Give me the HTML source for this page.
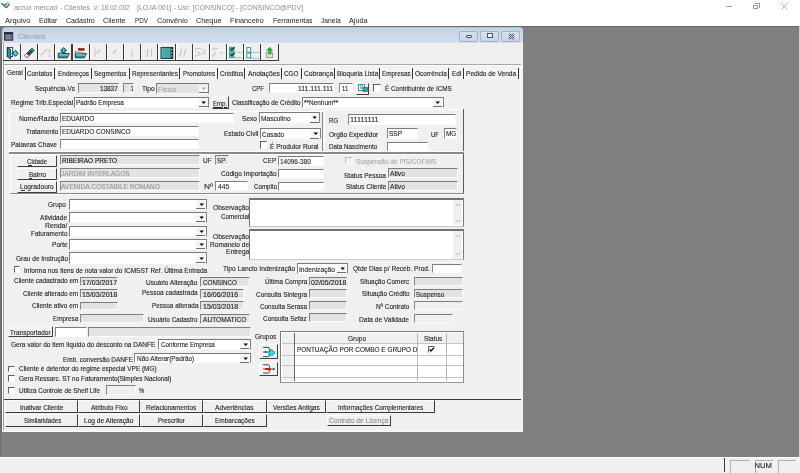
<!DOCTYPE html>
<html><head><meta charset="utf-8"><style>
*{margin:0;padding:0;box-sizing:border-box}
html,body{width:800px;height:473px;overflow:hidden;background:#fff;position:relative;font-family:"Liberation Sans",sans-serif}
.t{position:absolute;white-space:pre;-webkit-text-stroke:0.12px currentColor}
.b{position:absolute}
</style></head><body>
<svg class="b" style="left:1px;top:1px" width="9" height="8" viewBox="0 0 9 8"><path d="M0.5 2 L3 4.5 L6 2.5" stroke="#2a8a8a" stroke-width="1.6" fill="none"/><path d="M3 5 L5.5 6.5 L8.5 3" stroke="#666" stroke-width="1.4" fill="none"/><path d="M6 1.2 L8.3 2.2" stroke="#b8c040" stroke-width="1.4"/></svg>
<div class="b" style="left:725.8px;top:6px;width:6.2px;height:0.9px;background:#9a9a9a;"></div>
<div class="b" style="left:753.4px;top:4.6px;width:5.0px;height:4.5px;border:0.9px solid #9a9a9a;"></div>
<div class="b" style="left:755px;top:3.4px;width:4.8px;height:4.6px;border-top:0.9px solid #9a9a9a;border-right:0.9px solid #9a9a9a;"></div>
<svg class="b" style="left:781px;top:3px" width="7" height="7" viewBox="0 0 7 7"><path d="M0.5 0.5 L6.5 6.5 M6.5 0.5 L0.5 6.5" stroke="#9a9a9a" stroke-width="0.8"/></svg>
<div class="b" style="left:0px;top:26px;width:800px;height:431px;background:#808080;"></div>
<div class="b" style="left:0px;top:26px;width:800px;height:1.2px;background:#6a6a6a;"></div>
<div class="b" style="left:0px;top:26px;width:1px;height:431px;background:#727272;"></div>
<div class="b" style="left:0px;top:457px;width:800px;height:16px;background:#f0f0f0;"></div>
<div class="b" style="left:0px;top:457px;width:800px;height:1px;background:#fbfbfb;"></div>
<div class="b" style="left:798.7px;top:26px;width:1.3px;height:431px;background:#cfcfcf;"></div>
<div class="b" style="left:724.2px;top:458px;width:1.2px;height:14px;background:#3c3c3c;"></div>
<div class="b" style="left:730px;top:459.5px;width:19.5px;height:13.5px;border-top:1px solid #b0b0b0;border-left:1px solid #b0b0b0;"></div>
<div class="b" style="left:754.5px;top:459.5px;width:18.0px;height:13.5px;border-top:1px solid #b0b0b0;border-left:1px solid #b0b0b0;"></div>
<div class="b" style="left:777.5px;top:459.5px;width:18.0px;height:13.5px;border-top:1px solid #b0b0b0;border-left:1px solid #b0b0b0;"></div>
<div class="b" style="left:1.6px;top:27.4px;width:521.8px;height:404.9px;background:#d6e2f0;border-radius:4px 4px 0 0;border:1px solid #b4c2d2;border-bottom:none;"></div>
<div class="b" style="left:2.5px;top:28.4px;width:520.0px;height:14.8px;background:linear-gradient(#c3d2e4,#d3e0ee);border-radius:3px 3px 0 0;"></div>
<div class="b" style="left:2.2px;top:43px;width:1.4px;height:388.5px;background:#f4f8fc;"></div>
<div class="b" style="left:521.4px;top:43px;width:1.6px;height:388.5px;background:#f4f8fc;"></div>
<div class="b" style="left:2.2px;top:430.2px;width:520.8px;height:1.8px;background:#f4f8fc;"></div>
<div class="b" style="left:3.5px;top:43px;width:518.0px;height:387.2px;background:#f0f0f0;"></div>
<div class="b" style="left:3.2px;top:43px;width:0.8px;height:387.2px;background:#a4a4a4;"></div>
<div class="b" style="left:1.4px;top:43px;width:0.9px;height:389.3px;background:#666;"></div>
<svg class="b" style="left:4.4px;top:32px" width="9.2" height="8.6" viewBox="0 0 9.2 8.6"><rect x="0.4" y="0.4" width="8.4" height="7.8" fill="#555" stroke="#222" stroke-width="0.8"/><rect x="0.8" y="0.6" width="7.6" height="1.6" fill="#1a22b0"/><path d="M1.6 3.6h6M1.6 5.2h6M1.6 6.8h6" stroke="#e8e8e8" stroke-width="0.7" stroke-dasharray="1.2 0.6"/></svg>
<div class="t" style="left:17.5px;top:32.94px;font-size:7.8px;line-height:8.71px;color:#9ba7b6;">Clientes</div>
<div class="b" style="left:459px;top:30.5px;width:19.2px;height:11.3px;background:linear-gradient(#d6e2f0,#c7d6e9);border:1px solid #a4b4c8;border-radius:2px;"></div>
<div class="b" style="left:480px;top:30.5px;width:19px;height:11.3px;background:linear-gradient(#d6e2f0,#c7d6e9);border:1px solid #a4b4c8;border-radius:2px;"></div>
<div class="b" style="left:501px;top:30.5px;width:19px;height:11.3px;background:linear-gradient(#d6e2f0,#c7d6e9);border:1px solid #a4b4c8;border-radius:2px;"></div>
<div class="b" style="left:465.5px;top:34.6px;width:6.0px;height:3.0px;background:#eee;border:1px solid #555;border-radius:1px;"></div>
<div class="b" style="left:487px;top:33.3px;width:6px;height:4.9px;background:#eee;border:1px solid #555;border-top-width:1.5px;"></div>
<svg class="b" style="left:507.5px;top:32.5px" width="7" height="7" viewBox="0 0 7 7"><path d="M1 1 L6 6 M6 1 L1 6" stroke="#555" stroke-width="2"/><path d="M1 1 L6 6 M6 1 L1 6" stroke="#f0f0f0" stroke-width="0.8"/></svg>
<div class="b" style="left:3.3px;top:59.9px;width:275.3px;height:1.4px;background:#3a3a3a;"></div>
<div class="b" style="left:3.8px;top:44px;width:1.0px;height:16px;background:#ffffff;"></div>
<div class="b" style="left:19.88px;top:44px;width:1.1px;height:17px;background:#3a3a3a;"></div>
<div class="b" style="left:20.98px;top:44px;width:1.0px;height:16px;background:#ffffff;"></div>
<div class="b" style="left:37.06px;top:44px;width:1.1px;height:17px;background:#3a3a3a;"></div>
<div class="b" style="left:38.16px;top:44px;width:1.0px;height:16px;background:#ffffff;"></div>
<div class="b" style="left:54.24px;top:44px;width:1.1px;height:17px;background:#3a3a3a;"></div>
<div class="b" style="left:55.34px;top:44px;width:1.0px;height:16px;background:#ffffff;"></div>
<div class="b" style="left:71.42px;top:44px;width:1.1px;height:17px;background:#3a3a3a;"></div>
<div class="b" style="left:72.52px;top:44px;width:1.0px;height:16px;background:#ffffff;"></div>
<div class="b" style="left:88.6px;top:44px;width:1.1px;height:17px;background:#3a3a3a;"></div>
<div class="b" style="left:89.7px;top:44px;width:1.0px;height:16px;background:#ffffff;"></div>
<div class="b" style="left:105.78px;top:44px;width:1.1px;height:17px;background:#3a3a3a;"></div>
<div class="b" style="left:106.88px;top:44px;width:1.0px;height:16px;background:#ffffff;"></div>
<div class="b" style="left:122.96px;top:44px;width:1.1px;height:17px;background:#3a3a3a;"></div>
<div class="b" style="left:124.06px;top:44px;width:1.0px;height:16px;background:#ffffff;"></div>
<div class="b" style="left:140.14px;top:44px;width:1.1px;height:17px;background:#3a3a3a;"></div>
<div class="b" style="left:141.24px;top:44px;width:1.0px;height:16px;background:#ffffff;"></div>
<div class="b" style="left:157.32px;top:44px;width:1.1px;height:17px;background:#3a3a3a;"></div>
<div class="b" style="left:158.42px;top:44px;width:1.0px;height:16px;background:#ffffff;"></div>
<div class="b" style="left:174.5px;top:44px;width:1.1px;height:17px;background:#3a3a3a;"></div>
<div class="b" style="left:175.6px;top:44px;width:1.0px;height:16px;background:#ffffff;"></div>
<div class="b" style="left:191.68px;top:44px;width:1.1px;height:17px;background:#3a3a3a;"></div>
<div class="b" style="left:192.78px;top:44px;width:1.0px;height:16px;background:#ffffff;"></div>
<div class="b" style="left:208.86px;top:44px;width:1.1px;height:17px;background:#3a3a3a;"></div>
<div class="b" style="left:209.96px;top:44px;width:1.0px;height:16px;background:#ffffff;"></div>
<div class="b" style="left:226.04px;top:44px;width:1.1px;height:17px;background:#3a3a3a;"></div>
<div class="b" style="left:227.14px;top:44px;width:1.0px;height:16px;background:#ffffff;"></div>
<div class="b" style="left:243.22px;top:44px;width:1.1px;height:17px;background:#3a3a3a;"></div>
<div class="b" style="left:244.32px;top:44px;width:1.0px;height:16px;background:#ffffff;"></div>
<div class="b" style="left:260.4px;top:44px;width:1.1px;height:17px;background:#3a3a3a;"></div>
<div class="b" style="left:261.5px;top:44px;width:1.0px;height:16px;background:#ffffff;"></div>
<div class="b" style="left:277.58px;top:44px;width:1.1px;height:17px;background:#3a3a3a;"></div>
<svg class="b" style="left:3.3px;top:43.6px" width="17" height="17" viewBox="0 0 17 17"><rect x="4.3" y="3.5" width="5.4" height="9.1" fill="#fff" stroke="#222" stroke-width="0.8"/><path d="M4.3 3.6 L7.6 5.3 L7.6 14.9 L4.3 12.7 Z" fill="#1e9c9c" stroke="#0e2a2a" stroke-width="0.8"/><path d="M12.4 6.4 L15.3 9.3 L12.4 12.2 L9.6 9.3 Z" fill="#12f0f0" stroke="#111" stroke-width="0.9"/><circle cx="9.4" cy="9.3" r="0.8" fill="#1a2ab0"/></svg>
<svg class="b" style="left:20.48px;top:43.6px" width="17" height="17" viewBox="0 0 17 17"><path d="M4.6 11.4 L11.9 4.1 L14.3 6.5 L7 13.8 Z" fill="#444" stroke="#333" stroke-width="0.6"/><path d="M10.3 5.7 L11.9 4.1 L14.3 6.5 L12.7 8.1 Z" fill="#2aa0a0" stroke="#1a5a5a" stroke-width="0.5"/><path d="M4.6 11.4 L6.6 9.4 L9 11.8 L7 13.8 Z" fill="#fff" stroke="#444" stroke-width="0.7"/></svg>
<svg class="b" style="left:37.66px;top:43.6px" width="17" height="17" viewBox="0 0 17 17"><path d="M3.5 13 L3.5 9.5 L6 9.5 L6 7 L8.6 7 L8.6 4.5 M9.5 6.5 L11.5 6.5 L11.5 9.5 M10 12 L13 12" stroke="#c4c4c4" stroke-width="1" fill="none"/></svg>
<svg class="b" style="left:54.84px;top:43.6px" width="17" height="17" viewBox="0 0 17 17"><path d="M3.2 9.6 L3.2 13.8 L12.3 13.8 L14.4 9.6 Z" fill="#2a9090" stroke="#1a2a2a" stroke-width="0.8"/><path d="M3.2 9.6 L5 8.6 L8 8.6 L8.6 9.6" fill="#bfe8e8" stroke="#1a2a2a" stroke-width="0.6"/><path d="M4.2 11 L13.4 11" stroke="#c8f0f0" stroke-width="0.8"/><path d="M8.6 3.6 L11.4 6.4 L10 6.4 L10 8.8 L7.2 8.8 L7.2 6.4 L5.8 6.4 Z" fill="#19e0e0" stroke="#111" stroke-width="0.8"/><rect x="7.6" y="8.2" width="2" height="1.2" fill="#2233cc"/></svg>
<svg class="b" style="left:72.02px;top:43.6px" width="17" height="17" viewBox="0 0 17 17"><path d="M3.2 9.6 L3.2 13.8 L12.3 13.8 L14.4 9.6 Z" fill="#2a9090" stroke="#1a2a2a" stroke-width="0.8"/><path d="M3.2 9.6 L3.2 7.8 L5.2 7.8 L5.8 8.8 L10.5 8.8 L10.5 9.6" fill="#bfe8e8" stroke="#1a2a2a" stroke-width="0.6"/><path d="M4.2 11 L13.4 11" stroke="#c8f0f0" stroke-width="0.8"/><rect x="6.3" y="4.4" width="6" height="2" fill="#b01010" stroke="#600" stroke-width="0.4"/></svg>
<svg class="b" style="left:89.2px;top:43.6px" width="17" height="17" viewBox="0 0 17 17"><path d="M6 5 L6 13" stroke="#c4c4c4" stroke-width="1.1"/><path d="M11.5 5.5 L7.5 9.5" stroke="#c4c4c4" stroke-width="1.1"/></svg>
<svg class="b" style="left:106.38px;top:43.6px" width="17" height="17" viewBox="0 0 17 17"><path d="M10.5 5.5 L6.5 9.5" stroke="#c4c4c4" stroke-width="1.1"/><path d="M9.3 8.5 L10.5 12" stroke="#e2e2e2" stroke-width="0.8"/></svg>
<svg class="b" style="left:123.56px;top:43.6px" width="17" height="17" viewBox="0 0 17 17"><path d="M8 5 L8 13" stroke="#c4c4c4" stroke-width="1.1"/><path d="M8.5 11.5 L10.5 9.5" stroke="#e0e0e0" stroke-width="0.8"/></svg>
<svg class="b" style="left:140.74px;top:43.6px" width="17" height="17" viewBox="0 0 17 17"><path d="M6.5 5 L6.5 13 M10.5 5 L10.5 13" stroke="#c4c4c4" stroke-width="1.1"/></svg>
<svg class="b" style="left:157.92px;top:43.6px" width="17" height="17" viewBox="0 0 17 17"><rect x="3" y="3.4" width="11.8" height="11" fill="#48a8a8" stroke="#143030" stroke-width="0.9"/><rect x="12.6" y="3.4" width="2.2" height="11" fill="#1a2a2a"/><path d="M13.7 5 L13.7 6.4 M13.7 8.2 L13.7 9.8 M13.7 11.4 L13.7 12.8" stroke="#f0f0f0" stroke-width="0.9"/><path d="M4.4 4.4 L4.4 13.6" stroke="#86caca" stroke-width="0.6"/></svg>
<svg class="b" style="left:175.1px;top:43.6px" width="17" height="17" viewBox="0 0 17 17"><path d="M7 5 L4.5 12.5 M11 5 L8.5 12.5" stroke="#c4c4c4" stroke-width="1.1"/><path d="M8 11 L10 12.5" stroke="#e0e0e0" stroke-width="0.8"/></svg>
<svg class="b" style="left:192.28px;top:43.6px" width="17" height="17" viewBox="0 0 17 17"><path d="M3.5 4.6 L9 4.6 M3.5 4.6 L3.5 7 M5 8.5 L8 8.5 L8 11 L3.8 11 L3.8 13 M10 6 L13 6 L13 9 M9.5 9.5 L13.5 9.5" stroke="#c4c4c4" stroke-width="1" fill="none"/></svg>
<svg class="b" style="left:209.46px;top:43.6px" width="17" height="17" viewBox="0 0 17 17"><path d="M3.8 4.6 L9 4.6 M3.8 4.6 L3.8 6.5 M6 7.5 L6 11 L3.8 11 L3.8 13.4 M10.5 9 L12.5 9 L13.5 8" stroke="#c4c4c4" stroke-width="1" fill="none"/></svg>
<svg class="b" style="left:226.64px;top:43.6px" width="17" height="17" viewBox="0 0 17 17"><rect x="2.6" y="3.2" width="4.4" height="4.4" fill="#6ab8b8" stroke="#2a9090" stroke-width="0.8"/><rect x="2.6" y="8.8" width="4.4" height="4.8" fill="#6ab8b8" stroke="#2a9090" stroke-width="0.8"/><path d="M3.4 4.6 L4.8 6 L7.6 3.3 M3.4 10.2 L4.8 11.6 L7.6 8.9" stroke="#111" stroke-width="1.1" fill="none"/><path d="M7.2 8.2 L15 8.2 M7.2 13.8 L15 13.8" stroke="#3aa8a8" stroke-width="0.9" stroke-dasharray="1.3 0.9"/></svg>
<svg class="b" style="left:243.82px;top:43.6px" width="17" height="17" viewBox="0 0 17 17"><rect x="2.8" y="3.6" width="3.8" height="4.4" fill="#fff" stroke="#3aa0a0" stroke-width="1.1"/><rect x="2.8" y="9.2" width="3.8" height="4.6" fill="#fff" stroke="#3aa0a0" stroke-width="1.1"/><path d="M6.8 8.6 L15 8.6 M6.8 14.4 L15 14.4" stroke="#3aa8a8" stroke-width="0.9" stroke-dasharray="1.3 0.9"/></svg>
<svg class="b" style="left:261.0px;top:43.6px" width="17" height="17" viewBox="0 0 17 17"><rect x="5.2" y="8.8" width="6.4" height="4.8" fill="#dedede" stroke="#999" stroke-width="0.9"/><path d="M8.6 3.2 L11.6 6.4 L10 6.4 L10 10 L7.4 10 L7.4 6.4 L5.8 6.4 Z" fill="#22aa22" stroke="#128812" stroke-width="0.5"/><path d="M8.2 6.6 L8.2 9.6" stroke="#8fe08f" stroke-width="0.8"/></svg>
<div class="b" style="left:3.5px;top:64.2px;width:517.5px;height:1.2px;background:#a8a8a8;"></div>
<div class="b" style="left:3.5px;top:65.4px;width:517.5px;height:1.1px;background:#fdfdfd;"></div>
<div class="b" style="left:519.6px;top:65.4px;width:1.2px;height:333.6px;background:#fcfcfc;"></div>
<div class="b" style="left:3.6px;top:66.5px;width:21.6px;height:13.3px;background:#f0f0f0;"></div>
<div class="b" style="left:3.6px;top:66.5px;width:1.0px;height:13.3px;background:#ffffff;"></div>
<div class="b" style="left:25.2px;top:66.6px;width:1.1px;height:13.2px;background:#333;"></div>
<div class="b" style="left:26.3px;top:67.4px;width:28.1px;height:11.6px;background:#f3f3f3;"></div>
<div class="b" style="left:26.3px;top:67.4px;width:0.8px;height:11.6px;background:#ffffff;"></div>
<div class="b" style="left:54.4px;top:67.5px;width:1.1px;height:11.5px;background:#333;"></div>
<div class="b" style="left:55.5px;top:67.4px;width:35.4px;height:11.6px;background:#f3f3f3;"></div>
<div class="b" style="left:55.5px;top:67.4px;width:0.8px;height:11.6px;background:#ffffff;"></div>
<div class="b" style="left:90.9px;top:67.5px;width:1.1px;height:11.5px;background:#333;"></div>
<div class="b" style="left:92.0px;top:67.4px;width:36.6px;height:11.6px;background:#f3f3f3;"></div>
<div class="b" style="left:92.0px;top:67.4px;width:0.8px;height:11.6px;background:#ffffff;"></div>
<div class="b" style="left:128.6px;top:67.5px;width:1.1px;height:11.5px;background:#333;"></div>
<div class="b" style="left:129.7px;top:67.4px;width:49.3px;height:11.6px;background:#f3f3f3;"></div>
<div class="b" style="left:129.7px;top:67.4px;width:0.8px;height:11.6px;background:#ffffff;"></div>
<div class="b" style="left:179.0px;top:67.5px;width:1.1px;height:11.5px;background:#333;"></div>
<div class="b" style="left:180.1px;top:67.4px;width:36.5px;height:11.6px;background:#f3f3f3;"></div>
<div class="b" style="left:180.1px;top:67.4px;width:0.8px;height:11.6px;background:#ffffff;"></div>
<div class="b" style="left:216.6px;top:67.5px;width:1.1px;height:11.5px;background:#333;"></div>
<div class="b" style="left:217.7px;top:67.4px;width:26.6px;height:11.6px;background:#f3f3f3;"></div>
<div class="b" style="left:217.7px;top:67.4px;width:0.8px;height:11.6px;background:#ffffff;"></div>
<div class="b" style="left:244.3px;top:67.5px;width:1.1px;height:11.5px;background:#333;"></div>
<div class="b" style="left:245.4px;top:67.4px;width:35.4px;height:11.6px;background:#f3f3f3;"></div>
<div class="b" style="left:245.4px;top:67.4px;width:0.8px;height:11.6px;background:#ffffff;"></div>
<div class="b" style="left:280.8px;top:67.5px;width:1.1px;height:11.5px;background:#333;"></div>
<div class="b" style="left:281.9px;top:67.4px;width:19.2px;height:11.6px;background:#f3f3f3;"></div>
<div class="b" style="left:281.9px;top:67.4px;width:0.8px;height:11.6px;background:#ffffff;"></div>
<div class="b" style="left:301.1px;top:67.5px;width:1.1px;height:11.5px;background:#333;"></div>
<div class="b" style="left:302.2px;top:67.4px;width:31.9px;height:11.6px;background:#f3f3f3;"></div>
<div class="b" style="left:302.2px;top:67.4px;width:0.8px;height:11.6px;background:#ffffff;"></div>
<div class="b" style="left:334.1px;top:67.5px;width:1.1px;height:11.5px;background:#333;"></div>
<div class="b" style="left:335.2px;top:67.4px;width:44.0px;height:11.6px;background:#f3f3f3;"></div>
<div class="b" style="left:335.2px;top:67.4px;width:0.8px;height:11.6px;background:#ffffff;"></div>
<div class="b" style="left:379.2px;top:67.5px;width:1.1px;height:11.5px;background:#333;"></div>
<div class="b" style="left:380.3px;top:67.4px;width:31.4px;height:11.6px;background:#f3f3f3;"></div>
<div class="b" style="left:380.3px;top:67.4px;width:0.8px;height:11.6px;background:#ffffff;"></div>
<div class="b" style="left:411.7px;top:67.5px;width:1.1px;height:11.5px;background:#333;"></div>
<div class="b" style="left:412.8px;top:67.4px;width:35.5px;height:11.6px;background:#f3f3f3;"></div>
<div class="b" style="left:412.8px;top:67.4px;width:0.8px;height:11.6px;background:#ffffff;"></div>
<div class="b" style="left:448.3px;top:67.5px;width:1.1px;height:11.5px;background:#333;"></div>
<div class="b" style="left:449.4px;top:67.4px;width:13.2px;height:11.6px;background:#f3f3f3;"></div>
<div class="b" style="left:449.4px;top:67.4px;width:0.8px;height:11.6px;background:#ffffff;"></div>
<div class="b" style="left:462.6px;top:67.5px;width:1.1px;height:11.5px;background:#333;"></div>
<div class="b" style="left:463.7px;top:67.4px;width:54.2px;height:11.6px;background:#f3f3f3;"></div>
<div class="b" style="left:463.7px;top:67.4px;width:0.8px;height:11.6px;background:#ffffff;"></div>
<div class="b" style="left:517.9px;top:67.5px;width:1.1px;height:11.5px;background:#333;"></div>
<div class="b" style="left:78px;top:83px;width:41.2px;height:10px;background:#e3e3e3;border-top:1.5px solid #7c7c7c;border-left:1.3px solid #858585;border-bottom:1px solid #fbfbfb;border-right:1px solid #f8f8f8;"></div>
<div class="b" style="left:122.5px;top:83px;width:11.9px;height:10px;background:#e3e3e3;border-top:1.5px solid #7c7c7c;border-left:1.3px solid #858585;border-bottom:1px solid #fbfbfb;border-right:1px solid #f8f8f8;"></div>
<div class="b" style="left:156px;top:83px;width:53.4px;height:11px;background:#e3e3e3;border-top:1.6px solid #7a7a7a;border-left:1.4px solid #7f7f7f;border-right:1.4px solid #7f7f7f;border-bottom:1px solid #fbfbfb;"></div>
<div class="b" style="left:198.8px;top:84.6px;width:9.2px;height:8.8px;background:#f5f5f5;border-bottom:1.1px solid #6e6e6e;"></div>
<svg class="b" style="left:201.3px;top:87.25px" width="5.4" height="3.5" viewBox="0 0 5.4 3.5"><path d="M0.5 0.5 L4.9 0.5 L2.7 3.0 Z" fill="#a8a8a8"/></svg>
<div class="b" style="left:269.4px;top:83.4px;width:65.0px;height:9.6px;background:#ffffff;border-top:1.5px solid #7c7c7c;border-left:1.3px solid #858585;border-bottom:1px solid #fbfbfb;border-right:1px solid #f8f8f8;"></div>
<div class="b" style="left:338.9px;top:83.4px;width:14.4px;height:9.6px;background:#ffffff;border-top:1.5px solid #7c7c7c;border-left:1.3px solid #858585;border-bottom:1px solid #fbfbfb;border-right:1px solid #f8f8f8;"></div>
<div class="b" style="left:355.9px;top:82.6px;width:12.8px;height:12.0px;background:#f0f0f0;border-top:1px solid #fcfcfc;border-left:1px solid #fcfcfc;border-right:1px solid #404040;border-bottom:1.3px solid #404040;"></div>
<svg class="b" style="left:357.5px;top:84.4px" width="10" height="8" viewBox="0 0 10 8"><rect x="0.5" y="0.5" width="6" height="6" fill="#fff" stroke="#2a8a8a" stroke-width="0.9"/><path d="M2 2h3M2 4h3" stroke="#333" stroke-width="0.7"/><rect x="5" y="3.5" width="4.5" height="4" fill="#3aa0a0" stroke="#1a4a4a" stroke-width="0.6"/></svg>
<div class="b" style="left:373.4px;top:84.4px;width:7.9px;height:8.1px;background:#ffffff;border-top:1.4px solid #5e5e5e;border-left:1.4px solid #5e5e5e;border-right:1px solid #f8f8f8;border-bottom:1px solid #f8f8f8;"></div>
<div class="b" style="left:73.7px;top:96.5px;width:135.6px;height:11.5px;background:#ffffff;border-top:1.6px solid #7a7a7a;border-left:1.4px solid #7f7f7f;border-right:1.4px solid #7f7f7f;border-bottom:1px solid #fbfbfb;"></div>
<div class="b" style="left:198.7px;top:98.1px;width:9.2px;height:9.3px;background:#f5f5f5;border-bottom:1.1px solid #6e6e6e;"></div>
<svg class="b" style="left:201.2px;top:101.0px" width="5.4" height="3.5" viewBox="0 0 5.4 3.5"><path d="M0.5 0.5 L4.9 0.5 L2.7 3.0 Z" fill="#000"/></svg>
<div class="b" style="left:211.7px;top:96.2px;width:17.3px;height:12.7px;background:#f0f0f0;border-top:1px solid #fcfcfc;border-left:1px solid #fcfcfc;border-right:1px solid #404040;border-bottom:1.3px solid #404040;"></div>
<div class="b" style="left:302px;top:96.5px;width:141.5px;height:11.5px;background:#ffffff;border-top:1.6px solid #7a7a7a;border-left:1.4px solid #7f7f7f;border-right:1.4px solid #7f7f7f;border-bottom:1px solid #fbfbfb;"></div>
<div class="b" style="left:432.9px;top:98.1px;width:9.2px;height:9.3px;background:#f5f5f5;border-bottom:1.1px solid #6e6e6e;"></div>
<svg class="b" style="left:435.4px;top:101.0px" width="5.4" height="3.5" viewBox="0 0 5.4 3.5"><path d="M0.5 0.5 L4.9 0.5 L2.7 3.0 Z" fill="#000"/></svg>
<div class="b" style="left:9px;top:110.8px;width:313.5px;height:1.1px;background:#ffffff;"></div>
<div class="b" style="left:9px;top:110.8px;width:1px;height:41.7px;background:#ffffff;"></div>
<div class="b" style="left:323.5px;top:109.3px;width:139.5px;height:1.0px;background:#ffffff;"></div>
<div class="b" style="left:323.5px;top:109.3px;width:1.0px;height:42.9px;background:#ffffff;"></div>
<div class="b" style="left:322.1px;top:111.5px;width:1.3px;height:41.7px;background:#8a8a8a;"></div>
<div class="b" style="left:462.8px;top:108.8px;width:1.3px;height:44.7px;background:#5a5a5a;"></div>
<div class="b" style="left:9px;top:151.2px;width:455px;height:1.0px;background:#ffffff;"></div>
<div class="b" style="left:9px;top:152.1px;width:455px;height:1.5px;background:#8a8a8a;"></div>
<div class="b" style="left:9px;top:153.6px;width:455px;height:1.0px;background:#ffffff;"></div>
<div class="b" style="left:59.7px;top:113px;width:174.3px;height:10px;background:#ffffff;border-top:1.5px solid #7c7c7c;border-left:1.3px solid #858585;border-bottom:1px solid #fbfbfb;border-right:1px solid #f8f8f8;"></div>
<div class="b" style="left:59.7px;top:126px;width:139.3px;height:10px;background:#ffffff;border-top:1.5px solid #7c7c7c;border-left:1.3px solid #858585;border-bottom:1px solid #fbfbfb;border-right:1px solid #f8f8f8;"></div>
<div class="b" style="left:59.7px;top:139px;width:139.3px;height:10px;background:#ffffff;border-top:1.5px solid #7c7c7c;border-left:1.3px solid #858585;border-bottom:1px solid #fbfbfb;border-right:1px solid #f8f8f8;"></div>
<div class="b" style="left:259.4px;top:111.9px;width:60.85px;height:11.5px;background:#ffffff;border-top:1.6px solid #7a7a7a;border-left:1.4px solid #7f7f7f;border-right:1.4px solid #7f7f7f;border-bottom:1px solid #fbfbfb;"></div>
<div class="b" style="left:309.65px;top:113.5px;width:9.2px;height:9.3px;background:#f5f5f5;border-bottom:1.1px solid #6e6e6e;"></div>
<svg class="b" style="left:312.15px;top:116.4px" width="5.4" height="3.5" viewBox="0 0 5.4 3.5"><path d="M0.5 0.5 L4.9 0.5 L2.7 3.0 Z" fill="#000"/></svg>
<div class="b" style="left:260px;top:128px;width:60.7px;height:11.4px;background:#ffffff;border-top:1.6px solid #7a7a7a;border-left:1.4px solid #7f7f7f;border-right:1.4px solid #7f7f7f;border-bottom:1px solid #fbfbfb;"></div>
<div class="b" style="left:310.1px;top:129.6px;width:9.2px;height:9.2px;background:#f5f5f5;border-bottom:1.1px solid #6e6e6e;"></div>
<svg class="b" style="left:312.6px;top:132.45px" width="5.4" height="3.5" viewBox="0 0 5.4 3.5"><path d="M0.5 0.5 L4.9 0.5 L2.7 3.0 Z" fill="#000"/></svg>
<div class="b" style="left:260px;top:141.4px;width:6.8px;height:7.6px;background:#ffffff;border-top:1.4px solid #5e5e5e;border-left:1.4px solid #5e5e5e;border-right:1px solid #f8f8f8;border-bottom:1px solid #f8f8f8;"></div>
<div class="b" style="left:347.6px;top:114px;width:108.6px;height:10.6px;background:#ffffff;border-top:1.5px solid #7c7c7c;border-left:1.3px solid #858585;border-bottom:1px solid #fbfbfb;border-right:1px solid #f8f8f8;"></div>
<div class="b" style="left:386.9px;top:128.2px;width:31.2px;height:10.4px;background:#ffffff;border-top:1.5px solid #7c7c7c;border-left:1.3px solid #858585;border-bottom:1px solid #fbfbfb;border-right:1px solid #f8f8f8;"></div>
<div class="b" style="left:444px;top:128.2px;width:12.5px;height:10.4px;background:#ffffff;border-top:1.5px solid #7c7c7c;border-left:1.3px solid #858585;border-bottom:1px solid #fbfbfb;border-right:1px solid #f8f8f8;"></div>
<div class="b" style="left:387.2px;top:142.2px;width:41.3px;height:8.6px;background:#ffffff;border-top:1.5px solid #7c7c7c;border-left:1.3px solid #858585;border-bottom:1px solid #fbfbfb;border-right:1px solid #f8f8f8;"></div>
<div class="b" style="left:9.75px;top:153.6px;width:1.0px;height:39.4px;background:#ffffff;"></div>
<div class="b" style="left:462.8px;top:153.5px;width:1.3px;height:40.8px;background:#5a5a5a;"></div>
<div class="b" style="left:9.75px;top:193px;width:454.25px;height:1.3px;background:#8a8a8a;"></div>
<div class="b" style="left:9.75px;top:194.3px;width:454.25px;height:1.0px;background:#ffffff;"></div>
<div class="b" style="left:17.2px;top:154.7px;width:39.5px;height:12.5px;background:#f0f0f0;border-top:1px solid #fcfcfc;border-left:1px solid #fcfcfc;border-right:1px solid #404040;border-bottom:1.3px solid #404040;"></div>
<div class="b" style="left:17.2px;top:168.2px;width:39.5px;height:11.8px;background:#f0f0f0;border-top:1px solid #fcfcfc;border-left:1px solid #fcfcfc;border-right:1px solid #404040;border-bottom:1.3px solid #404040;"></div>
<div class="b" style="left:28.8px;top:177.7px;width:3.7px;height:0.6px;background:#333;"></div>
<div class="b" style="left:17.2px;top:181px;width:39.5px;height:11.6px;background:#f0f0f0;border-top:1px solid #fcfcfc;border-left:1px solid #fcfcfc;border-right:1px solid #404040;border-bottom:1.3px solid #404040;"></div>
<div class="b" style="left:20.5px;top:190px;width:4.0px;height:0.6px;background:#333;"></div>
<div class="b" style="left:27.5px;top:164.9px;width:4.0px;height:0.6px;background:#333;"></div>
<div class="b" style="left:60px;top:155.2px;width:140px;height:9.7px;background:#e3e3e3;border-top:1.5px solid #7c7c7c;border-left:1.3px solid #858585;border-bottom:1px solid #fbfbfb;border-right:1px solid #f8f8f8;"></div>
<div class="b" style="left:60px;top:168.2px;width:140px;height:9.4px;background:#e3e3e3;border-top:1.5px solid #7c7c7c;border-left:1.3px solid #858585;border-bottom:1px solid #fbfbfb;border-right:1px solid #f8f8f8;"></div>
<div class="b" style="left:60px;top:181px;width:140px;height:9.6px;background:#e3e3e3;border-top:1.5px solid #7c7c7c;border-left:1.3px solid #858585;border-bottom:1px solid #fbfbfb;border-right:1px solid #f8f8f8;"></div>
<div class="b" style="left:214.7px;top:155.2px;width:14.7px;height:9.7px;background:#e3e3e3;border-top:1.5px solid #7c7c7c;border-left:1.3px solid #858585;border-bottom:1px solid #fbfbfb;border-right:1px solid #f8f8f8;"></div>
<div class="b" style="left:277.5px;top:155.5px;width:46.2px;height:10.0px;background:#ffffff;border-top:1.5px solid #7c7c7c;border-left:1.3px solid #858585;border-bottom:1px solid #fbfbfb;border-right:1px solid #f8f8f8;"></div>
<div class="b" style="left:277.5px;top:168.5px;width:46.2px;height:9.5px;background:#ffffff;border-top:1.5px solid #7c7c7c;border-left:1.3px solid #858585;border-bottom:1px solid #fbfbfb;border-right:1px solid #f8f8f8;"></div>
<div class="b" style="left:215.2px;top:181.3px;width:32.6px;height:9.5px;background:#ffffff;border-top:1.5px solid #7c7c7c;border-left:1.3px solid #858585;border-bottom:1px solid #fbfbfb;border-right:1px solid #f8f8f8;"></div>
<div class="b" style="left:277.5px;top:181.7px;width:46.2px;height:9.1px;background:#ffffff;border-top:1.5px solid #7c7c7c;border-left:1.3px solid #858585;border-bottom:1px solid #fbfbfb;border-right:1px solid #f8f8f8;"></div>
<div class="b" style="left:345px;top:156.6px;width:7.5px;height:7.8px;background:#f0f0f0;border-top:1.4px solid #c0c0c0;border-left:1.4px solid #c0c0c0;border-right:1px solid #f8f8f8;border-bottom:1px solid #f8f8f8;"></div>
<div class="b" style="left:387.5px;top:168px;width:70.5px;height:10px;background:#e3e3e3;border-top:1.5px solid #7c7c7c;border-left:1.3px solid #858585;border-bottom:1px solid #fbfbfb;border-right:1px solid #f8f8f8;"></div>
<div class="b" style="left:387.5px;top:181px;width:70.5px;height:10px;background:#e3e3e3;border-top:1.5px solid #7c7c7c;border-left:1.3px solid #858585;border-bottom:1px solid #fbfbfb;border-right:1px solid #f8f8f8;"></div>
<div class="b" style="left:68.5px;top:198.5px;width:138.2px;height:11.5px;background:#ffffff;border-top:1.6px solid #7a7a7a;border-left:1.4px solid #7f7f7f;border-right:1.4px solid #7f7f7f;border-bottom:1px solid #fbfbfb;"></div>
<div class="b" style="left:196.1px;top:200.1px;width:9.2px;height:9.3px;background:#f5f5f5;border-bottom:1.1px solid #6e6e6e;"></div>
<svg class="b" style="left:198.6px;top:203.0px" width="5.4" height="3.5" viewBox="0 0 5.4 3.5"><path d="M0.5 0.5 L4.9 0.5 L2.7 3.0 Z" fill="#000"/></svg>
<div class="b" style="left:68.5px;top:212px;width:138.2px;height:11px;background:#ffffff;border-top:1.6px solid #7a7a7a;border-left:1.4px solid #7f7f7f;border-right:1.4px solid #7f7f7f;border-bottom:1px solid #fbfbfb;"></div>
<div class="b" style="left:196.1px;top:213.6px;width:9.2px;height:8.8px;background:#f5f5f5;border-bottom:1.1px solid #6e6e6e;"></div>
<svg class="b" style="left:198.6px;top:216.25px" width="5.4" height="3.5" viewBox="0 0 5.4 3.5"><path d="M0.5 0.5 L4.9 0.5 L2.7 3.0 Z" fill="#000"/></svg>
<div class="b" style="left:68.5px;top:225.5px;width:138.2px;height:11.0px;background:#ffffff;border-top:1.6px solid #7a7a7a;border-left:1.4px solid #7f7f7f;border-right:1.4px solid #7f7f7f;border-bottom:1px solid #fbfbfb;"></div>
<div class="b" style="left:196.1px;top:227.1px;width:9.2px;height:8.8px;background:#f5f5f5;border-bottom:1.1px solid #6e6e6e;"></div>
<svg class="b" style="left:198.6px;top:229.75px" width="5.4" height="3.5" viewBox="0 0 5.4 3.5"><path d="M0.5 0.5 L4.9 0.5 L2.7 3.0 Z" fill="#000"/></svg>
<div class="b" style="left:68.5px;top:239px;width:138.2px;height:11px;background:#ffffff;border-top:1.6px solid #7a7a7a;border-left:1.4px solid #7f7f7f;border-right:1.4px solid #7f7f7f;border-bottom:1px solid #fbfbfb;"></div>
<div class="b" style="left:196.1px;top:240.6px;width:9.2px;height:8.8px;background:#f5f5f5;border-bottom:1.1px solid #6e6e6e;"></div>
<svg class="b" style="left:198.6px;top:243.25px" width="5.4" height="3.5" viewBox="0 0 5.4 3.5"><path d="M0.5 0.5 L4.9 0.5 L2.7 3.0 Z" fill="#000"/></svg>
<div class="b" style="left:68.5px;top:252.3px;width:138.2px;height:11.3px;background:#ffffff;border-top:1.6px solid #7a7a7a;border-left:1.4px solid #7f7f7f;border-right:1.4px solid #7f7f7f;border-bottom:1px solid #fbfbfb;"></div>
<div class="b" style="left:196.1px;top:253.9px;width:9.2px;height:9.1px;background:#f5f5f5;border-bottom:1.1px solid #6e6e6e;"></div>
<svg class="b" style="left:198.6px;top:256.7px" width="5.4" height="3.5" viewBox="0 0 5.4 3.5"><path d="M0.5 0.5 L4.9 0.5 L2.7 3.0 Z" fill="#000"/></svg>
<div class="b" style="left:249.4px;top:198.3px;width:214.9px;height:28.3px;background:#fff;border-top:2px solid #737373;border-left:1.8px solid #777;border-right:1.8px solid #7c7c7c;border-bottom:1.4px solid #c8c8c8;"></div>
<div class="b" style="left:452.7px;top:200.3px;width:9.8px;height:24.9px;background:#f0f0f0;"></div>
<svg class="b" style="left:455.0px;top:203.3px" width="6" height="4" viewBox="0 0 6 4"><path d="M0.8 3.2 L3 1 L5.2 3.2" stroke="#a8a8a8" stroke-width="0.8" fill="none"/></svg>
<svg class="b" style="left:455.0px;top:218.6px" width="6" height="4" viewBox="0 0 6 4"><path d="M0.8 0.8 L3 3 L5.2 0.8" stroke="#a8a8a8" stroke-width="0.8" fill="none"/></svg>
<div class="b" style="left:249.4px;top:229.2px;width:214.9px;height:30.8px;background:#fff;border-top:2px solid #737373;border-left:1.8px solid #777;border-right:1.8px solid #7c7c7c;border-bottom:1.4px solid #c8c8c8;"></div>
<div class="b" style="left:452.7px;top:231.2px;width:9.8px;height:27.4px;background:#f0f0f0;"></div>
<svg class="b" style="left:455.0px;top:234.2px" width="6" height="4" viewBox="0 0 6 4"><path d="M0.8 3.2 L3 1 L5.2 3.2" stroke="#a8a8a8" stroke-width="0.8" fill="none"/></svg>
<svg class="b" style="left:455.0px;top:252px" width="6" height="4" viewBox="0 0 6 4"><path d="M0.8 0.8 L3 3 L5.2 0.8" stroke="#a8a8a8" stroke-width="0.8" fill="none"/></svg>
<div class="b" style="left:13.8px;top:266.4px;width:6.5px;height:7.0px;background:#ffffff;border-top:1.4px solid #5e5e5e;border-left:1.4px solid #5e5e5e;border-right:1px solid #f8f8f8;border-bottom:1px solid #f8f8f8;"></div>
<div class="b" style="left:296.6px;top:263px;width:51.3px;height:10.9px;background:#ffffff;border-top:1.6px solid #7a7a7a;border-left:1.4px solid #7f7f7f;border-right:1.4px solid #7f7f7f;border-bottom:1px solid #fbfbfb;"></div>
<div class="b" style="left:337.3px;top:264.6px;width:9.2px;height:8.7px;background:#f5f5f5;border-bottom:1.1px solid #6e6e6e;"></div>
<svg class="b" style="left:339.8px;top:267.2px" width="5.4" height="3.5" viewBox="0 0 5.4 3.5"><path d="M0.5 0.5 L4.9 0.5 L2.7 3.0 Z" fill="#000"/></svg>
<div class="b" style="left:431.5px;top:263.7px;width:30.5px;height:9.3px;background:#ffffff;border-top:1.5px solid #7c7c7c;border-left:1.3px solid #858585;border-bottom:1px solid #fbfbfb;border-right:1px solid #f8f8f8;"></div>
<div class="b" style="left:79.7px;top:277.2px;width:38.3px;height:8.6px;background:#e3e3e3;border-top:1.5px solid #7c7c7c;border-left:1.3px solid #858585;border-bottom:1px solid #fbfbfb;border-right:1px solid #f8f8f8;"></div>
<div class="b" style="left:79.7px;top:289.2px;width:38.3px;height:8.6px;background:#e3e3e3;border-top:1.5px solid #7c7c7c;border-left:1.3px solid #858585;border-bottom:1px solid #fbfbfb;border-right:1px solid #f8f8f8;"></div>
<div class="b" style="left:79.7px;top:301.6px;width:38.3px;height:8.8px;background:#e3e3e3;border-top:1.5px solid #7c7c7c;border-left:1.3px solid #858585;border-bottom:1px solid #fbfbfb;border-right:1px solid #f8f8f8;"></div>
<div class="b" style="left:79.7px;top:314px;width:63.9px;height:9px;background:#e3e3e3;border-top:1.5px solid #7c7c7c;border-left:1.3px solid #858585;border-bottom:1px solid #fbfbfb;border-right:1px solid #f8f8f8;"></div>
<div class="b" style="left:200.4px;top:277px;width:49.2px;height:10px;background:#e3e3e3;border-top:1.5px solid #7c7c7c;border-left:1.3px solid #858585;border-bottom:1px solid #fbfbfb;border-right:1px solid #f8f8f8;"></div>
<div class="b" style="left:200.4px;top:289px;width:43.2px;height:10px;background:#e3e3e3;border-top:1.5px solid #7c7c7c;border-left:1.3px solid #858585;border-bottom:1px solid #fbfbfb;border-right:1px solid #f8f8f8;"></div>
<div class="b" style="left:200.4px;top:301px;width:43.2px;height:9.4px;background:#e3e3e3;border-top:1.5px solid #7c7c7c;border-left:1.3px solid #858585;border-bottom:1px solid #fbfbfb;border-right:1px solid #f8f8f8;"></div>
<div class="b" style="left:200.4px;top:314px;width:49.2px;height:9.6px;background:#e3e3e3;border-top:1.5px solid #7c7c7c;border-left:1.3px solid #858585;border-bottom:1px solid #fbfbfb;border-right:1px solid #f8f8f8;"></div>
<div class="b" style="left:309px;top:277px;width:38.4px;height:9px;background:#e3e3e3;border-top:1.5px solid #7c7c7c;border-left:1.3px solid #858585;border-bottom:1px solid #fbfbfb;border-right:1px solid #f8f8f8;"></div>
<div class="b" style="left:309px;top:289px;width:38.4px;height:9px;background:#e3e3e3;border-top:1.5px solid #7c7c7c;border-left:1.3px solid #858585;border-bottom:1px solid #fbfbfb;border-right:1px solid #f8f8f8;"></div>
<div class="b" style="left:309px;top:301px;width:38.4px;height:9.4px;background:#e3e3e3;border-top:1.5px solid #7c7c7c;border-left:1.3px solid #858585;border-bottom:1px solid #fbfbfb;border-right:1px solid #f8f8f8;"></div>
<div class="b" style="left:309px;top:313px;width:38.4px;height:9.4px;background:#e3e3e3;border-top:1.5px solid #7c7c7c;border-left:1.3px solid #858585;border-bottom:1px solid #fbfbfb;border-right:1px solid #f8f8f8;"></div>
<div class="b" style="left:413.6px;top:277.2px;width:49.3px;height:8.8px;background:#e3e3e3;border-top:1.5px solid #7c7c7c;border-left:1.3px solid #858585;border-bottom:1px solid #fbfbfb;border-right:1px solid #f8f8f8;"></div>
<div class="b" style="left:413.6px;top:289.2px;width:49.3px;height:8.6px;background:#e3e3e3;border-top:1.5px solid #7c7c7c;border-left:1.3px solid #858585;border-bottom:1px solid #fbfbfb;border-right:1px solid #f8f8f8;"></div>
<div class="b" style="left:413.6px;top:301px;width:49.3px;height:9.4px;background:#efefef;border-top:1.5px solid #7c7c7c;border-left:1.3px solid #858585;border-bottom:1px solid #fbfbfb;border-right:1px solid #f8f8f8;"></div>
<div class="b" style="left:413.6px;top:314px;width:39.5px;height:9.4px;background:#efefef;border-top:1.5px solid #7c7c7c;border-left:1.3px solid #858585;border-bottom:1px solid #fbfbfb;border-right:1px solid #f8f8f8;"></div>
<div class="b" style="left:7.6px;top:325.9px;width:45.6px;height:11.0px;background:#f0f0f0;border-top:1px solid #fcfcfc;border-left:1px solid #fcfcfc;border-right:1px solid #404040;border-bottom:1.3px solid #404040;"></div>
<div class="b" style="left:54.9px;top:327.1px;width:32.1px;height:9.8px;background:#ffffff;border-top:1.5px solid #7c7c7c;border-left:1.3px solid #858585;border-bottom:1px solid #fbfbfb;border-right:1px solid #f8f8f8;"></div>
<div class="b" style="left:87.5px;top:326.8px;width:163.7px;height:10.1px;background:#e3e3e3;border-top:1.5px solid #7c7c7c;border-left:1.3px solid #858585;border-bottom:1px solid #fbfbfb;border-right:1px solid #f8f8f8;"></div>
<div class="b" style="left:158.4px;top:338.5px;width:92.3px;height:11.2px;background:#ffffff;border-top:1.6px solid #7a7a7a;border-left:1.4px solid #7f7f7f;border-right:1.4px solid #7f7f7f;border-bottom:1px solid #fbfbfb;"></div>
<div class="b" style="left:240.1px;top:340.1px;width:9.2px;height:9.0px;background:#f5f5f5;border-bottom:1.1px solid #6e6e6e;"></div>
<svg class="b" style="left:242.6px;top:342.85px" width="5.4" height="3.5" viewBox="0 0 5.4 3.5"><path d="M0.5 0.5 L4.9 0.5 L2.7 3.0 Z" fill="#000"/></svg>
<div class="b" style="left:134px;top:352.7px;width:116.7px;height:10.5px;background:#ffffff;border-top:1.6px solid #7a7a7a;border-left:1.4px solid #7f7f7f;border-right:1.4px solid #7f7f7f;border-bottom:1px solid #fbfbfb;"></div>
<div class="b" style="left:240.1px;top:354.3px;width:9.2px;height:8.3px;background:#f5f5f5;border-bottom:1.1px solid #6e6e6e;"></div>
<svg class="b" style="left:242.6px;top:356.7px" width="5.4" height="3.5" viewBox="0 0 5.4 3.5"><path d="M0.5 0.5 L4.9 0.5 L2.7 3.0 Z" fill="#000"/></svg>
<div class="b" style="left:8.4px;top:365.9px;width:6.5px;height:6.5px;background:#ffffff;border-top:1.4px solid #5e5e5e;border-left:1.4px solid #5e5e5e;border-right:1px solid #f8f8f8;border-bottom:1px solid #f8f8f8;"></div>
<div class="b" style="left:8.4px;top:375.4px;width:6.5px;height:6.6px;background:#ffffff;border-top:1.4px solid #5e5e5e;border-left:1.4px solid #5e5e5e;border-right:1px solid #f8f8f8;border-bottom:1px solid #f8f8f8;"></div>
<div class="b" style="left:8.4px;top:387.4px;width:6.5px;height:7.0px;background:#ffffff;border-top:1.4px solid #5e5e5e;border-left:1.4px solid #5e5e5e;border-right:1px solid #f8f8f8;border-bottom:1px solid #f8f8f8;"></div>
<div class="b" style="left:105.9px;top:385.3px;width:30.0px;height:10.2px;background:#efefef;border-top:1.5px solid #7c7c7c;border-left:1.3px solid #858585;border-bottom:1px solid #fbfbfb;border-right:1px solid #f8f8f8;"></div>
<div class="b" style="left:259.4px;top:344.4px;width:18.4px;height:14.9px;background:#f0f0f0;border-top:1px solid #fcfcfc;border-left:1px solid #fcfcfc;border-right:1px solid #404040;border-bottom:1.3px solid #404040;"></div>
<div class="b" style="left:259.4px;top:361.7px;width:18.4px;height:14.8px;background:#f0f0f0;border-top:1px solid #fcfcfc;border-left:1px solid #fcfcfc;border-right:1px solid #404040;border-bottom:1.3px solid #404040;"></div>
<svg class="b" style="left:256px;top:342px" width="26" height="38" viewBox="0 0 26 38"><path d="M7 5.4 L12 5.4 Q13.4 5.4 13.4 7 L13.4 13 Q13.4 14.6 12 14.6 L7 14.6 M7 10 L12.6 10" stroke="#333" stroke-width="0.9" fill="#fff"/><circle cx="9.6" cy="10" r="0.9" fill="#1a2ab0"/><path d="M14.4 7.6 L16.6 7.6 L16.6 9.6 L18.8 9.6 L18.8 11.9 L16.6 11.9 L16.6 13.8 L14.4 13.8 L14.4 11.9 L12.4 11.9 L12.4 9.6 L14.4 9.6 Z" fill="#10e8e8" stroke="#0a8a9a" stroke-width="0.5"/><path d="M7 22.8 L12 22.8 Q13.4 22.8 13.4 24.4 L13.4 29.4 Q13.4 31 12 31 L7 31 M7 27 L12.6 27" stroke="#333" stroke-width="0.9" fill="#fff"/><rect x="9.2" y="26" width="5.8" height="2.2" fill="#e81010"/><path d="M15 27.1 L17 27.1" stroke="#1a2ab0" stroke-width="0.7"/><ellipse cx="17.8" cy="27.1" rx="0.9" ry="1.1" fill="#1a2ab0"/></svg>
<div class="b" style="left:280.2px;top:331.3px;width:184.2px;height:51.4px;background:#fff;border-top:1.8px solid #7a7a7a;border-left:1.6px solid #7a7a7a;border-right:1.4px solid #8e8e8e;border-bottom:1.4px solid #9a9a9a;"></div>
<div class="b" style="left:281.5px;top:332.6px;width:181.6px;height:11.1px;background:#f0f0f0;"></div>
<div class="b" style="left:281.5px;top:332.6px;width:12.5px;height:48.8px;background:#f0f0f0;"></div>
<div class="b" style="left:281.5px;top:343.2px;width:181.6px;height:1.0px;background:#c4c4c4;"></div>
<div class="b" style="left:281.5px;top:354.6px;width:181.6px;height:1.0px;background:#c4c4c4;"></div>
<div class="b" style="left:281.5px;top:365.4px;width:181.6px;height:1.0px;background:#c4c4c4;"></div>
<div class="b" style="left:281.5px;top:376.8px;width:181.6px;height:1.0px;background:#c4c4c4;"></div>
<div class="b" style="left:293.8px;top:332.6px;width:1.0px;height:48.8px;background:#6a6a6a;"></div>
<div class="b" style="left:417.4px;top:332.6px;width:1.0px;height:48.8px;background:#b8b8b8;"></div>
<div class="b" style="left:446.2px;top:332.6px;width:1.0px;height:48.8px;background:#b8b8b8;"></div>
<div class="b" style="left:428.2px;top:345.7px;width:7.0px;height:7.2px;background:#ffffff;border-top:1.4px solid #5e5e5e;border-left:1.4px solid #5e5e5e;border-right:1px solid #f8f8f8;border-bottom:1px solid #f8f8f8;"></div>
<svg class="b" style="left:428.2px;top:345.7px" width="7.0" height="7.2" viewBox="0 0 7 7"><path d="M1.6 3.3 L3 4.9 L6 1.5" stroke="#000" stroke-width="1.3" fill="none"/></svg>
<div class="b" style="left:3.5px;top:399px;width:517.3px;height:1.2px;background:#3a3a3a;"></div>
<div class="b" style="left:5px;top:400.3px;width:73.2px;height:13.0px;background:#f0f0f0;border-top:1px solid #fdfdfd;border-left:1px solid #fdfdfd;border-right:1.2px solid #3a3a3a;border-bottom:1.3px solid #3a3a3a;"></div>
<div class="b" style="left:78.2px;top:400.3px;width:61.6px;height:13.0px;background:#f0f0f0;border-top:1px solid #fdfdfd;border-left:1px solid #fdfdfd;border-right:1.2px solid #3a3a3a;border-bottom:1.3px solid #3a3a3a;"></div>
<div class="b" style="left:139.8px;top:400.3px;width:63.2px;height:13.0px;background:#f0f0f0;border-top:1px solid #fdfdfd;border-left:1px solid #fdfdfd;border-right:1.2px solid #3a3a3a;border-bottom:1.3px solid #3a3a3a;"></div>
<div class="b" style="left:203px;top:400.3px;width:63.6px;height:13.0px;background:#f0f0f0;border-top:1px solid #fdfdfd;border-left:1px solid #fdfdfd;border-right:1.2px solid #3a3a3a;border-bottom:1.3px solid #3a3a3a;"></div>
<div class="b" style="left:266.6px;top:400.3px;width:59.8px;height:13.0px;background:#f0f0f0;border-top:1px solid #fdfdfd;border-left:1px solid #fdfdfd;border-right:1.2px solid #3a3a3a;border-bottom:1.3px solid #3a3a3a;"></div>
<div class="b" style="left:326.4px;top:400.3px;width:109.1px;height:13.0px;background:#f0f0f0;border-top:1px solid #fdfdfd;border-left:1px solid #fdfdfd;border-right:1.2px solid #3a3a3a;border-bottom:1.3px solid #3a3a3a;"></div>
<div class="b" style="left:5px;top:413.6px;width:73.2px;height:13.2px;background:#f0f0f0;border-top:1px solid #fdfdfd;border-left:1px solid #fdfdfd;border-right:1.2px solid #3a3a3a;border-bottom:1.3px solid #3a3a3a;"></div>
<div class="b" style="left:78.2px;top:413.6px;width:61.6px;height:13.2px;background:#f0f0f0;border-top:1px solid #fdfdfd;border-left:1px solid #fdfdfd;border-right:1.2px solid #3a3a3a;border-bottom:1.3px solid #3a3a3a;"></div>
<div class="b" style="left:139.8px;top:413.6px;width:63.2px;height:13.2px;background:#f0f0f0;border-top:1px solid #fdfdfd;border-left:1px solid #fdfdfd;border-right:1.2px solid #3a3a3a;border-bottom:1.3px solid #3a3a3a;"></div>
<div class="b" style="left:203px;top:413.6px;width:63.6px;height:13.2px;background:#f0f0f0;border-top:1px solid #fdfdfd;border-left:1px solid #fdfdfd;border-right:1.2px solid #3a3a3a;border-bottom:1.3px solid #3a3a3a;"></div>
<div class="b" style="left:327.1px;top:414.7px;width:63.5px;height:11.5px;background:#f0f0f0;border-top:1px solid #fdfdfd;border-left:1px solid #fdfdfd;border-right:1.2px solid #3a3a3a;border-bottom:1.3px solid #3a3a3a;"></div>
<div id="tx" style="position:absolute;left:0;top:0;width:800px;height:473px;filter:grayscale(1)">
<div class="t" style="left:14.0px;top:3.82px;font-size:7.6px;line-height:8.49px;color:#8a8a8a;transform:scaleX(0.95);transform-origin:0 0;-webkit-text-stroke:0;">acrux&#32;mercari&#32;-&#32;Clientes</div>
<div class="t" style="left:94.0px;top:3.82px;font-size:7.6px;line-height:8.49px;color:#8a8a8a;transform:scaleX(0.86);transform-origin:0 0;-webkit-text-stroke:0;">v:&#32;18.02.002</div>
<div class="t" style="left:136.75px;top:3.82px;font-size:7.6px;line-height:8.49px;color:#8a8a8a;transform:scaleX(0.92);transform-origin:0 0;-webkit-text-stroke:0;">[LOJA&#32;001]&#32;-&#32;Usr:&#32;[CONSINCO]&#32;-&#32;[CONSINCO@PDV]</div>
<div class="t" style="left:4.5px;top:16.62px;font-size:7.6px;line-height:8.49px;color:#1a1a1a;transform:scaleX(0.99);transform-origin:0 0;-webkit-text-stroke:0;">Arquivo</div>
<div class="t" style="left:38.75px;top:16.62px;font-size:7.6px;line-height:8.49px;color:#1a1a1a;transform:scaleX(0.92);transform-origin:0 0;-webkit-text-stroke:0;">Editar</div>
<div class="t" style="left:65.75px;top:16.62px;font-size:7.6px;line-height:8.49px;color:#1a1a1a;transform:scaleX(0.93);transform-origin:0 0;-webkit-text-stroke:0;">Cadastro</div>
<div class="t" style="left:103.25px;top:16.62px;font-size:7.6px;line-height:8.49px;color:#1a1a1a;transform:scaleX(0.95);transform-origin:0 0;-webkit-text-stroke:0;">Cliente</div>
<div class="t" style="left:134.5px;top:16.62px;font-size:7.6px;line-height:8.49px;color:#1a1a1a;transform:scaleX(0.83);transform-origin:0 0;-webkit-text-stroke:0;">PDV</div>
<div class="t" style="left:156.75px;top:16.62px;font-size:7.6px;line-height:8.49px;color:#1a1a1a;transform:scaleX(0.96);transform-origin:0 0;-webkit-text-stroke:0;">Convênio</div>
<div class="t" style="left:196.25px;top:16.62px;font-size:7.6px;line-height:8.49px;color:#1a1a1a;transform:scaleX(0.96);transform-origin:0 0;-webkit-text-stroke:0;">Cheque</div>
<div class="t" style="left:230.0px;top:16.62px;font-size:7.6px;line-height:8.49px;color:#1a1a1a;transform:scaleX(0.95);transform-origin:0 0;-webkit-text-stroke:0;">Financeiro</div>
<div class="t" style="left:272.5px;top:16.62px;font-size:7.6px;line-height:8.49px;color:#1a1a1a;transform:scaleX(0.92);transform-origin:0 0;-webkit-text-stroke:0;">Ferramentas</div>
<div class="t" style="left:320.75px;top:16.62px;font-size:7.6px;line-height:8.49px;color:#1a1a1a;transform:scaleX(0.88);transform-origin:0 0;-webkit-text-stroke:0;">Janela</div>
<div class="t" style="left:349.25px;top:16.62px;font-size:7.6px;line-height:8.49px;color:#1a1a1a;transform:scaleX(0.96);transform-origin:0 0;-webkit-text-stroke:0;">Ajuda</div>
<div class="t" style="left:754.5px;top:462.42px;font-size:7.6px;line-height:8.49px;color:#1e1e1e;">NUM</div>
<div class="t" style="left:7.0px;top:68.7px;font-size:7.4px;line-height:8.27px;color:#1e1e1e;transform:scaleX(0.86);transform-origin:0 0;">Geral</div>
<div class="t" style="left:27.2px;top:69.6px;font-size:7.4px;line-height:8.27px;color:#1e1e1e;transform:scaleX(0.86);transform-origin:0 0;">Contatos</div>
<div class="t" style="left:57.8px;top:69.6px;font-size:7.4px;line-height:8.27px;color:#1e1e1e;transform:scaleX(0.88);transform-origin:0 0;">Endereços</div>
<div class="t" style="left:94.0px;top:69.6px;font-size:7.4px;line-height:8.27px;color:#1e1e1e;transform:scaleX(0.87);transform-origin:0 0;">Segmentos</div>
<div class="t" style="left:131.5px;top:69.6px;font-size:7.4px;line-height:8.27px;color:#1e1e1e;transform:scaleX(0.88);transform-origin:0 0;">Representantes</div>
<div class="t" style="left:182.5px;top:69.6px;font-size:7.4px;line-height:8.27px;color:#1e1e1e;transform:scaleX(0.84);transform-origin:0 0;">Promotores</div>
<div class="t" style="left:219.5px;top:69.6px;font-size:7.4px;line-height:8.27px;color:#1e1e1e;transform:scaleX(0.85);transform-origin:0 0;">Créditos</div>
<div class="t" style="left:247.5px;top:69.6px;font-size:7.4px;line-height:8.27px;color:#1e1e1e;transform:scaleX(0.91);transform-origin:0 0;">Anotações</div>
<div class="t" style="left:283.75px;top:69.6px;font-size:7.4px;line-height:8.27px;color:#1e1e1e;transform:scaleX(0.86);transform-origin:0 0;">CGO</div>
<div class="t" style="left:303.5px;top:69.6px;font-size:7.4px;line-height:8.27px;color:#1e1e1e;transform:scaleX(0.91);transform-origin:0 0;">Cobrança</div>
<div class="t" style="left:336.5px;top:69.6px;font-size:7.4px;line-height:8.27px;color:#1e1e1e;transform:scaleX(0.89);transform-origin:0 0;">Bloqueia&#32;Lista</div>
<div class="t" style="left:381.6px;top:69.6px;font-size:7.4px;line-height:8.27px;color:#1e1e1e;transform:scaleX(0.86);transform-origin:0 0;">Empresas</div>
<div class="t" style="left:415.0px;top:69.6px;font-size:7.4px;line-height:8.27px;color:#1e1e1e;transform:scaleX(0.88);transform-origin:0 0;">Ocorrência</div>
<div class="t" style="left:451.7px;top:69.6px;font-size:7.4px;line-height:8.27px;color:#1e1e1e;transform:scaleX(0.87);transform-origin:0 0;">Edi</div>
<div class="t" style="left:465.9px;top:69.6px;font-size:7.4px;line-height:8.27px;color:#1e1e1e;transform:scaleX(0.89);transform-origin:0 0;">Pedido&#32;de&#32;Venda</div>
<div class="t" style="left:34.5px;top:85.1px;font-size:7.4px;line-height:8.27px;color:#1e1e1e;transform:scaleX(0.87);transform-origin:0 0;">Sequência-Vs</div>
<div class="t" style="left:100.0px;top:85.07px;font-size:7.4px;line-height:8.27px;color:#1e1e1e;transform:scaleX(0.86);transform-origin:0 0;">13837</div>
<div class="t" style="left:130.6px;top:85.07px;font-size:7.4px;line-height:8.27px;color:#1e1e1e;transform:scaleX(0.61);transform-origin:0 0;">1</div>
<div class="t" style="left:142.0px;top:85.1px;font-size:7.4px;line-height:8.27px;color:#1e1e1e;transform:scaleX(0.9);transform-origin:0 0;">Tipo</div>
<div class="t" style="left:157.5px;top:85.57px;font-size:7.4px;line-height:8.27px;color:#a8a8a8;transform:scaleX(0.92);transform-origin:0 0;">Física</div>
<div class="t" style="left:251.7px;top:85.1px;font-size:7.4px;line-height:8.27px;color:#1e1e1e;transform:scaleX(0.81);transform-origin:0 0;">CPF</div>
<div class="t" style="left:297.75px;top:85.27px;font-size:7.4px;line-height:8.27px;color:#1e1e1e;transform:scaleX(0.93);transform-origin:0 0;">111.111.111</div>
<div class="t" style="left:341.9px;top:85.27px;font-size:7.4px;line-height:8.27px;color:#1e1e1e;transform:scaleX(0.81);transform-origin:0 0;">11</div>
<div class="t" style="left:384.8px;top:85.1px;font-size:7.4px;line-height:8.27px;color:#1e1e1e;transform:scaleX(0.86);transform-origin:0 0;">É&#32;Contribuinte&#32;de&#32;ICMS</div>
<div class="t" style="left:11.0px;top:99.4px;font-size:7.4px;line-height:8.27px;color:#1e1e1e;transform:scaleX(0.89);transform-origin:0 0;">Regime&#32;Trib.Especial</div>
<div class="t" style="left:76.2px;top:99.32px;font-size:7.4px;line-height:8.27px;color:#1e1e1e;transform:scaleX(0.86);transform-origin:0 0;">Padrão&#32;Empresa</div>
<div class="t" style="left:213.4px;top:99.7px;font-size:7.4px;line-height:8.27px;color:#1e1e1e;transform:scaleX(0.82);transform-origin:0 0;text-decoration:underline;text-decoration-thickness:0.6px;text-underline-offset:1px;">Emp.</div>
<div class="t" style="left:232.2px;top:99.4px;font-size:7.4px;line-height:8.27px;color:#1e1e1e;transform:scaleX(0.86);transform-origin:0 0;">Classificação&#32;de&#32;Crédito</div>
<div class="t" style="left:304.4px;top:99.32px;font-size:7.4px;line-height:8.27px;color:#1e1e1e;transform:scaleX(0.87);transform-origin:0 0;">**Nenhum**</div>
<div class="t" style="left:19.2px;top:115.1px;font-size:7.4px;line-height:8.27px;color:#1e1e1e;transform:scaleX(0.91);transform-origin:0 0;">Nome/Razão</div>
<div class="t" style="left:61.9px;top:115.07px;font-size:7.4px;line-height:8.27px;color:#1e1e1e;transform:scaleX(0.87);transform-origin:0 0;">EDUARDO</div>
<div class="t" style="left:26.3px;top:127.7px;font-size:7.4px;line-height:8.27px;color:#1e1e1e;transform:scaleX(0.86);transform-origin:0 0;">Tratamento</div>
<div class="t" style="left:61.9px;top:128.07px;font-size:7.4px;line-height:8.27px;color:#1e1e1e;transform:scaleX(0.87);transform-origin:0 0;">EDUARDO&#32;CONSINCO</div>
<div class="t" style="left:11.0px;top:140.7px;font-size:7.4px;line-height:8.27px;color:#1e1e1e;transform:scaleX(0.88);transform-origin:0 0;">Palavras&#32;Chave</div>
<div class="t" style="left:242.0px;top:115.1px;font-size:7.4px;line-height:8.27px;color:#1e1e1e;transform:scaleX(0.89);transform-origin:0 0;">Sexo</div>
<div class="t" style="left:261.0px;top:114.72px;font-size:7.4px;line-height:8.27px;color:#1e1e1e;transform:scaleX(0.89);transform-origin:0 0;">Masculino</div>
<div class="t" style="left:223.6px;top:130.3px;font-size:7.4px;line-height:8.27px;color:#1e1e1e;transform:scaleX(0.88);transform-origin:0 0;">Estado&#32;Civil</div>
<div class="t" style="left:261.9px;top:130.77px;font-size:7.4px;line-height:8.27px;color:#1e1e1e;transform:scaleX(0.87);transform-origin:0 0;">Casado</div>
<div class="t" style="left:270.3px;top:142.9px;font-size:7.4px;line-height:8.27px;color:#1e1e1e;transform:scaleX(0.88);transform-origin:0 0;">É&#32;Produtor&#32;Rural</div>
<div class="t" style="left:328.9px;top:116.6px;font-size:7.4px;line-height:8.27px;color:#1e1e1e;transform:scaleX(0.82);transform-origin:0 0;">RG</div>
<div class="t" style="left:349.8px;top:116.37px;font-size:7.4px;line-height:8.27px;color:#1e1e1e;transform:scaleX(0.98);transform-origin:0 0;">11111111</div>
<div class="t" style="left:329.0px;top:131.1px;font-size:7.4px;line-height:8.27px;color:#1e1e1e;transform:scaleX(0.88);transform-origin:0 0;">Orgão&#32;Expedidor</div>
<div class="t" style="left:389.2px;top:130.47px;font-size:7.4px;line-height:8.27px;color:#1e1e1e;transform:scaleX(0.88);transform-origin:0 0;">SSP</div>
<div class="t" style="left:431.0px;top:131.1px;font-size:7.4px;line-height:8.27px;color:#1e1e1e;transform:scaleX(0.81);transform-origin:0 0;">UF</div>
<div class="t" style="left:445.75px;top:130.47px;font-size:7.4px;line-height:8.27px;color:#1e1e1e;transform:scaleX(0.86);transform-origin:0 0;">MG</div>
<div class="t" style="left:329.0px;top:143.1px;font-size:7.4px;line-height:8.27px;color:#1e1e1e;transform:scaleX(0.85);transform-origin:0 0;">Data&#32;Nascimento</div>
<div class="t" style="left:27.0px;top:157.8px;font-size:7.4px;line-height:8.27px;color:#1e1e1e;transform:scaleX(0.86);transform-origin:0 0;">Cidade</div>
<div class="t" style="left:28.5px;top:170.6px;font-size:7.4px;line-height:8.27px;color:#1e1e1e;transform:scaleX(0.87);transform-origin:0 0;">Bairro</div>
<div class="t" style="left:20.2px;top:182.9px;font-size:7.4px;line-height:8.27px;color:#1e1e1e;transform:scaleX(0.89);transform-origin:0 0;">Logradouro</div>
<div class="t" style="left:61.75px;top:157.3px;font-size:7.4px;line-height:8.27px;color:#111;transform:scaleX(0.88);transform-origin:0 0;">RIBEIRAO&#32;PRETO</div>
<div class="t" style="left:61.3px;top:170.1px;font-size:7.4px;line-height:8.27px;color:#959595;transform:scaleX(0.89);transform-origin:0 0;">JARDIM&#32;INTERLAGOS</div>
<div class="t" style="left:61.3px;top:182.8px;font-size:7.4px;line-height:8.27px;color:#959595;transform:scaleX(0.9);transform-origin:0 0;">AVENIDA&#32;COSTABILE&#32;ROMANO</div>
<div class="t" style="left:203.0px;top:157.3px;font-size:7.4px;line-height:8.27px;color:#1e1e1e;transform:scaleX(0.89);transform-origin:0 0;">UF</div>
<div class="t" style="left:216.75px;top:157.12px;font-size:7.4px;line-height:8.27px;color:#333;transform:scaleX(0.87);transform-origin:0 0;">SP</div>
<div class="t" style="left:263.0px;top:157.3px;font-size:7.4px;line-height:8.27px;color:#1e1e1e;transform:scaleX(0.87);transform-origin:0 0;">CEP</div>
<div class="t" style="left:279.7px;top:157.57px;font-size:7.4px;line-height:8.27px;color:#1e1e1e;transform:scaleX(0.87);transform-origin:0 0;">14096-380</div>
<div class="t" style="left:220.8px;top:170.3px;font-size:7.4px;line-height:8.27px;color:#1e1e1e;transform:scaleX(0.89);transform-origin:0 0;">Código&#32;Importação</div>
<div class="t" style="left:203.5px;top:183.1px;font-size:7.4px;line-height:8.27px;color:#1e1e1e;transform:scaleX(1.12);transform-origin:0 0;">Nº</div>
<div class="t" style="left:217.5px;top:183.12px;font-size:7.4px;line-height:8.27px;color:#1e1e1e;transform:scaleX(0.91);transform-origin:0 0;">445</div>
<div class="t" style="left:253.5px;top:183.1px;font-size:7.4px;line-height:8.27px;color:#1e1e1e;transform:scaleX(0.84);transform-origin:0 0;">Complto</div>
<div class="t" style="left:356.2px;top:157.5px;font-size:7.4px;line-height:8.27px;color:#a8a8a8;transform:scaleX(0.88);transform-origin:0 0;">Suspensão&#32;de&#32;PIS/COFINS</div>
<div class="t" style="left:343.7px;top:172.1px;font-size:7.4px;line-height:8.27px;color:#1e1e1e;transform:scaleX(0.88);transform-origin:0 0;">Status&#32;Pessoa</div>
<div class="t" style="left:389.5px;top:169.6px;font-size:7.4px;line-height:8.27px;color:#1e1e1e;transform:scaleX(0.91);transform-origin:0 0;">Ativo</div>
<div class="t" style="left:345.7px;top:183.3px;font-size:7.4px;line-height:8.27px;color:#1e1e1e;transform:scaleX(0.88);transform-origin:0 0;">Status&#32;Cliente</div>
<div class="t" style="left:389.5px;top:182.6px;font-size:7.4px;line-height:8.27px;color:#1e1e1e;transform:scaleX(0.91);transform-origin:0 0;">Ativo</div>
<div class="t" style="left:48.2px;top:201.0px;font-size:7.4px;line-height:8.27px;color:#1e1e1e;transform:scaleX(0.87);transform-origin:0 0;">Grupo</div>
<div class="t" style="left:39.8px;top:214.2px;font-size:7.4px;line-height:8.27px;color:#1e1e1e;transform:scaleX(0.89);transform-origin:0 0;">Atividade</div>
<div class="t" style="left:44.8px;top:221.7px;font-size:7.4px;line-height:8.27px;color:#1e1e1e;transform:scaleX(0.94);transform-origin:0 0;">Renda/</div>
<div class="t" style="left:31.3px;top:229.8px;font-size:7.4px;line-height:8.27px;color:#1e1e1e;transform:scaleX(0.87);transform-origin:0 0;">Faturamento</div>
<div class="t" style="left:52.0px;top:240.8px;font-size:7.4px;line-height:8.27px;color:#1e1e1e;transform:scaleX(0.89);transform-origin:0 0;">Porte</div>
<div class="t" style="left:16.0px;top:254.8px;font-size:7.4px;line-height:8.27px;color:#1e1e1e;transform:scaleX(0.88);transform-origin:0 0;">Grau&#32;de&#32;Instrução</div>
<div class="t" style="left:213.0px;top:204.4px;font-size:7.4px;line-height:8.27px;color:#1e1e1e;transform:scaleX(0.9);transform-origin:0 0;">Observação</div>
<div class="t" style="left:220.6px;top:212.9px;font-size:7.4px;line-height:8.27px;color:#1e1e1e;transform:scaleX(0.85);transform-origin:0 0;">Comercial</div>
<div class="t" style="left:213.0px;top:233.1px;font-size:7.4px;line-height:8.27px;color:#1e1e1e;transform:scaleX(0.9);transform-origin:0 0;">Observação</div>
<div class="t" style="left:210.0px;top:240.8px;font-size:7.4px;line-height:8.27px;color:#1e1e1e;transform:scaleX(0.89);transform-origin:0 0;">Romaneio&#32;de</div>
<div class="t" style="left:225.7px;top:248.4px;font-size:7.4px;line-height:8.27px;color:#1e1e1e;transform:scaleX(0.9);transform-origin:0 0;">Entrega</div>
<div class="t" style="left:24.4px;top:266.9px;font-size:7.4px;line-height:8.27px;color:#1e1e1e;transform:scaleX(0.88);transform-origin:0 0;">Informa&#32;nos&#32;itens&#32;de&#32;nota&#32;valor&#32;do&#32;ICMSST&#32;Ref.&#32;Última&#32;Entrada</div>
<div class="t" style="left:223.0px;top:265.1px;font-size:7.4px;line-height:8.27px;color:#1e1e1e;transform:scaleX(0.9);transform-origin:0 0;">Tipo&#32;Lancto&#32;Indenização</div>
<div class="t" style="left:298.6px;top:265.52px;font-size:7.4px;line-height:8.27px;color:#1e1e1e;transform:scaleX(0.9);transform-origin:0 0;">Indenização</div>
<div class="t" style="left:352.8px;top:265.1px;font-size:7.4px;line-height:8.27px;color:#1e1e1e;transform:scaleX(0.89);transform-origin:0 0;">Qtde&#32;Dias&#32;p/&#32;Receb.&#32;Prod.</div>
<div class="t" style="left:13.8px;top:277.0px;font-size:7.4px;line-height:8.27px;color:#1e1e1e;transform:scaleX(0.87);transform-origin:0 0;">Cliente&#32;cadastrado&#32;em</div>
<div class="t" style="left:82.0px;top:278.5px;font-size:7.4px;line-height:8.27px;color:#1e1e1e;transform:scaleX(0.95);transform-origin:0 0;">17/03/2017</div>
<div class="t" style="left:22.8px;top:289.5px;font-size:7.4px;line-height:8.27px;color:#1e1e1e;transform:scaleX(0.86);transform-origin:0 0;">Cliente&#32;alterado&#32;em</div>
<div class="t" style="left:82.0px;top:290.5px;font-size:7.4px;line-height:8.27px;color:#1e1e1e;transform:scaleX(0.96);transform-origin:0 0;">15/03/2018</div>
<div class="t" style="left:31.7px;top:301.7px;font-size:7.4px;line-height:8.27px;color:#1e1e1e;transform:scaleX(0.87);transform-origin:0 0;">Cliente&#32;ativo&#32;em</div>
<div class="t" style="left:52.8px;top:314.7px;font-size:7.4px;line-height:8.27px;color:#1e1e1e;transform:scaleX(0.85);transform-origin:0 0;">Empresa</div>
<div class="t" style="left:146.4px;top:278.5px;font-size:7.4px;line-height:8.27px;color:#1e1e1e;transform:scaleX(0.88);transform-origin:0 0;">Usuário&#32;Alteração</div>
<div class="t" style="left:202.9px;top:279.07px;font-size:7.4px;line-height:8.27px;color:#1e1e1e;transform:scaleX(0.85);transform-origin:0 0;">CONSINCO</div>
<div class="t" style="left:142.4px;top:289.1px;font-size:7.4px;line-height:8.27px;color:#1e1e1e;transform:scaleX(0.88);transform-origin:0 0;">Pessoa&#32;cadastrada</div>
<div class="t" style="left:202.9px;top:291.07px;font-size:7.4px;line-height:8.27px;color:#1e1e1e;transform:scaleX(0.95);transform-origin:0 0;">16/06/2016</div>
<div class="t" style="left:151.6px;top:302.1px;font-size:7.4px;line-height:8.27px;color:#1e1e1e;transform:scaleX(0.87);transform-origin:0 0;">Pessoa&#32;alterada</div>
<div class="t" style="left:203.1px;top:302.77px;font-size:7.4px;line-height:8.27px;color:#1e1e1e;transform:scaleX(0.95);transform-origin:0 0;">15/03/2018</div>
<div class="t" style="left:148.4px;top:315.7px;font-size:7.4px;line-height:8.27px;color:#1e1e1e;transform:scaleX(0.86);transform-origin:0 0;">Usuário&#32;Cadastro</div>
<div class="t" style="left:202.6px;top:315.87px;font-size:7.4px;line-height:8.27px;color:#1e1e1e;transform:scaleX(0.89);transform-origin:0 0;">AUTOMATICO</div>
<div class="t" style="left:264.6px;top:278.1px;font-size:7.4px;line-height:8.27px;color:#1e1e1e;transform:scaleX(0.86);transform-origin:0 0;">Última&#32;Compra</div>
<div class="t" style="left:311.4px;top:278.57px;font-size:7.4px;line-height:8.27px;color:#1e1e1e;transform:scaleX(0.96);transform-origin:0 0;">02/05/2018</div>
<div class="t" style="left:256.0px;top:290.5px;font-size:7.4px;line-height:8.27px;color:#1e1e1e;transform:scaleX(0.87);transform-origin:0 0;">Consulta&#32;Sintegra</div>
<div class="t" style="left:260.0px;top:302.5px;font-size:7.4px;line-height:8.27px;color:#1e1e1e;transform:scaleX(0.86);transform-origin:0 0;">Consulta&#32;Serasa</div>
<div class="t" style="left:263.4px;top:314.5px;font-size:7.4px;line-height:8.27px;color:#1e1e1e;transform:scaleX(0.87);transform-origin:0 0;">Consulta&#32;Sefaz</div>
<div class="t" style="left:359.6px;top:278.1px;font-size:7.4px;line-height:8.27px;color:#1e1e1e;transform:scaleX(0.87);transform-origin:0 0;">Situação&#32;Comerc</div>
<div class="t" style="left:361.7px;top:290.3px;font-size:7.4px;line-height:8.27px;color:#1e1e1e;transform:scaleX(0.87);transform-origin:0 0;">Situação&#32;Crédito</div>
<div class="t" style="left:416.0px;top:290.57px;font-size:7.4px;line-height:8.27px;color:#1e1e1e;transform:scaleX(0.86);transform-origin:0 0;">Suspenso</div>
<div class="t" style="left:375.6px;top:302.5px;font-size:7.4px;line-height:8.27px;color:#1e1e1e;transform:scaleX(0.87);transform-origin:0 0;">Nº&#32;Contrato</div>
<div class="t" style="left:358.8px;top:315.5px;font-size:7.4px;line-height:8.27px;color:#1e1e1e;transform:scaleX(0.89);transform-origin:0 0;">Data&#32;de&#32;Validade</div>
<div class="t" style="left:10.1px;top:329.0px;font-size:7.4px;line-height:8.27px;color:#1e1e1e;transform:scaleX(0.88);transform-origin:0 0;">Transportador</div>
<div class="t" style="left:10.5px;top:340.7px;font-size:7.4px;line-height:8.27px;color:#1e1e1e;transform:scaleX(0.88);transform-origin:0 0;">Gera&#32;valor&#32;do&#32;item&#32;liquido&#32;do&#32;desconto&#32;na&#32;DANFE</div>
<div class="t" style="left:160.7px;top:341.17px;font-size:7.4px;line-height:8.27px;color:#1e1e1e;transform:scaleX(0.84);transform-origin:0 0;">Conforme&#32;Empresa</div>
<div class="t" style="left:62.8px;top:355.8px;font-size:7.4px;line-height:8.27px;color:#1e1e1e;transform:scaleX(0.87);transform-origin:0 0;">Emb.&#32;conversão&#32;DANFE</div>
<div class="t" style="left:136.75px;top:355.02px;font-size:7.4px;line-height:8.27px;color:#1e1e1e;transform:scaleX(0.87);transform-origin:0 0;">Não&#32;Alterar(Padrão)</div>
<div class="t" style="left:18.9px;top:364.9px;font-size:7.4px;line-height:8.27px;color:#1e1e1e;transform:scaleX(0.87);transform-origin:0 0;">Cliente&#32;é&#32;detentor&#32;do&#32;regime&#32;especial&#32;VPE&#32;(MG)</div>
<div class="t" style="left:18.9px;top:375.3px;font-size:7.4px;line-height:8.27px;color:#1e1e1e;transform:scaleX(0.87);transform-origin:0 0;">Gera&#32;Ressarc.&#32;ST&#32;no&#32;Faturamento(Simples&#32;Nacional)</div>
<div class="t" style="left:18.9px;top:387.1px;font-size:7.4px;line-height:8.27px;color:#1e1e1e;transform:scaleX(0.87);transform-origin:0 0;">Utiliza&#32;Controle&#32;de&#32;Shelf&#32;Life</div>
<div class="t" style="left:139.0px;top:387.1px;font-size:7.4px;line-height:8.27px;color:#1e1e1e;transform:scaleX(0.79);transform-origin:0 0;">%</div>
<div class="t" style="left:255.2px;top:333.3px;font-size:7.4px;line-height:8.27px;color:#1e1e1e;transform:scaleX(0.88);transform-origin:0 0;">Grupos</div>
<div class="t" style="left:347.5px;top:334.9px;font-size:7.4px;line-height:8.27px;color:#1e1e1e;transform:scaleX(0.88);transform-origin:0 0;">Grupo</div>
<div class="t" style="left:423.7px;top:334.8px;font-size:7.4px;line-height:8.27px;color:#1e1e1e;transform:scaleX(0.87);transform-origin:0 0;">Status</div>
<div class="t" style="left:296.7px;top:346.1px;font-size:7.4px;line-height:8.27px;color:#1e1e1e;transform:scaleX(0.87);transform-origin:0 0;">PONTUAÇÃO&#32;POR&#32;COMBO&#32;E&#32;GRUPO&#32;D</div>
<div class="t" style="left:20.0px;top:404.1px;font-size:7.4px;line-height:8.27px;color:#1e1e1e;transform:scaleX(0.88);transform-origin:0 0;">Inativar&#32;Cliente</div>
<div class="t" style="left:90.6px;top:404.1px;font-size:7.4px;line-height:8.27px;color:#1e1e1e;transform:scaleX(0.88);transform-origin:0 0;">Atributo&#32;Fixo</div>
<div class="t" style="left:146.0px;top:404.1px;font-size:7.4px;line-height:8.27px;color:#1e1e1e;transform:scaleX(0.88);transform-origin:0 0;">Relacionamentos</div>
<div class="t" style="left:215.0px;top:404.1px;font-size:7.4px;line-height:8.27px;color:#1e1e1e;transform:scaleX(0.9);transform-origin:0 0;">Advertências</div>
<div class="t" style="left:273.0px;top:404.1px;font-size:7.4px;line-height:8.27px;color:#1e1e1e;transform:scaleX(0.88);transform-origin:0 0;">Versões&#32;Antigas</div>
<div class="t" style="left:337.7px;top:404.1px;font-size:7.4px;line-height:8.27px;color:#1e1e1e;transform:scaleX(0.86);transform-origin:0 0;">Informações&#32;Complementares</div>
<div class="t" style="left:23.6px;top:417.3px;font-size:7.4px;line-height:8.27px;color:#1e1e1e;transform:scaleX(0.84);transform-origin:0 0;">Similaridades</div>
<div class="t" style="left:84.0px;top:417.3px;font-size:7.4px;line-height:8.27px;color:#1e1e1e;transform:scaleX(0.89);transform-origin:0 0;">Log&#32;de&#32;Alteração</div>
<div class="t" style="left:158.0px;top:417.3px;font-size:7.4px;line-height:8.27px;color:#1e1e1e;transform:scaleX(0.85);transform-origin:0 0;">Prescritor</div>
<div class="t" style="left:215.0px;top:417.3px;font-size:7.4px;line-height:8.27px;color:#1e1e1e;transform:scaleX(0.88);transform-origin:0 0;">Embarcações</div>
<div class="t" style="left:328.7px;top:417.4px;font-size:7.4px;line-height:8.27px;color:#8e8e8e;transform:scaleX(0.9);transform-origin:0 0;">Contrato&#32;de&#32;Licença</div>
</div></body></html>
